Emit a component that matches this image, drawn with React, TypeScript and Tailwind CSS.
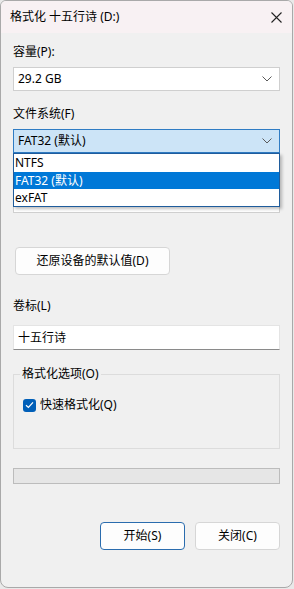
import React from "react";

const font = {
  fontFamily: '"Segoe UI", "Noto Sans", "Noto Sans CJK SC", sans-serif',
};

function Chevron() {
  return (
    <svg width="10" height="6" viewBox="0 0 10 6" className="shrink-0">
      <path d="M0.5 0.5 L5 5 L9.5 0.5" fill="none" stroke="#5a5a5a" strokeWidth="1" />
    </svg>
  );
}

function Combo({ value, active }: { value: string; active?: boolean }) {
  return (
    <div
      className={
        "flex h-[24px] items-center justify-between border pl-[4px] pr-[7px] text-[12px] text-black " +
        (active ? "border-[#2f7cc4] bg-[#cce4f7]" : "border-[#cfcfcf] bg-white")
      }
    >
      <span>{value}</span>
      <Chevron />
    </div>
  );
}

function Button({ label, primary, w }: { label: string; primary?: boolean; w: string }) {
  return (
    <button
      className={
        "flex h-[28px] items-center justify-center rounded-[4px] border bg-[#fdfdfd] text-[12px] text-black " +
        w +
        (primary ? " border-[#2a6cae]" : " border-[#d6d6d6]")
      }
    >
      {label}
    </button>
  );
}

export default function App() {
  return (
    <div className="h-[589px] w-[294px] bg-[#e9e9e9]" style={font}>
      <div className="flex h-[588px] w-[293px] flex-col overflow-hidden rounded-b-[8px] rounded-t-[6px] border border-[#a9a9a9] bg-[#f0f0f0]">
        {/* title bar */}
        <div className="flex h-[32px] shrink-0 items-center justify-between bg-[#f8f1f3] pl-[9px] pr-[8px]">
          <span className="text-[12px] text-black">格式化 十五行诗 (D:)</span>
          <svg width="11" height="11" viewBox="0 0 11 11" className="mr-[2px]">
            <path d="M0.5 0.5 L10.5 10.5 M10.5 0.5 L0.5 10.5" stroke="#222" strokeWidth="1.1" />
          </svg>
        </div>

        <div className="flex flex-col px-[12px] text-[12px] text-black">
          <div className="mt-[11px] h-[16px] leading-[16px]">容量(P):</div>
          <div className="mt-[7px]">
            <Combo value="29.2 GB" />
          </div>

          <div className="mt-[15px] h-[16px] leading-[16px]">文件系统(F)</div>
          <div className="relative mt-[7px]">
            <Combo value="FAT32 (默认)" active />
            {/* allocation-size row, covered by the open list */}
            <div className="mt-[12px] h-[16px]" />
            <div className="mt-[8px] h-[24px] border border-[#cfcfcf] bg-white" />

            {/* open dropdown list */}
            <div className="absolute left-0 right-0 top-[24px] z-10 flex flex-col border border-[#1f5c9c] bg-white text-[12px] shadow-[2px_2px_3px_rgba(0,0,0,0.25)]">
              <div className="h-[18px] pl-[1px] leading-[18px]">NTFS</div>
              <div className="h-[17px] bg-[#0078d7] pl-[1px] leading-[17px] text-white">FAT32 (默认)</div>
              <div className="h-[17px] pl-[1px] leading-[17px]">exFAT</div>
            </div>
          </div>

          <div className="mt-[34px] pl-[2px]">
            <Button label="还原设备的默认值(D)" w="w-[155px]" />
          </div>

          <div className="mt-[23px] h-[16px] leading-[16px]">卷标(L)</div>
          <div className="mt-[11px] flex h-[25px] items-center border border-[#e4e4e4] border-b-[#8a8a8a] bg-white pl-[4px]">
            十五行诗
          </div>

          {/* group box */}
          <div className="relative mt-[24px] h-[75px] border border-[#dcdcdc]">
            <span className="absolute left-[6px] top-[-9px] bg-[#f0f0f0] px-[2px] leading-[16px]">
              格式化选项(O)
            </span>
            <div className="mt-[22px] flex items-center gap-[4px] pl-[9px]">
              <span className="flex h-[13px] w-[13px] items-center justify-center rounded-[3px] bg-[#005fb8]">
                <svg width="9" height="8" viewBox="0 0 9 8">
                  <path d="M1 4.2 L3.4 6.5 L8 1.3" fill="none" stroke="white" strokeWidth="1.2" />
                </svg>
              </span>
              <span className="leading-[16px]">快速格式化(Q)</span>
            </div>
          </div>

          <div className="mt-[19px] h-[16px] border border-[#bcbcbc] bg-[#e6e6e6]" />

          <div className="mt-[38px] flex justify-end gap-[10px]">
            <Button label="开始(S)" primary w="w-[85px]" />
            <Button label="关闭(C)" w="w-[85px]" />
          </div>
        </div>
      </div>
    </div>
  );
}
